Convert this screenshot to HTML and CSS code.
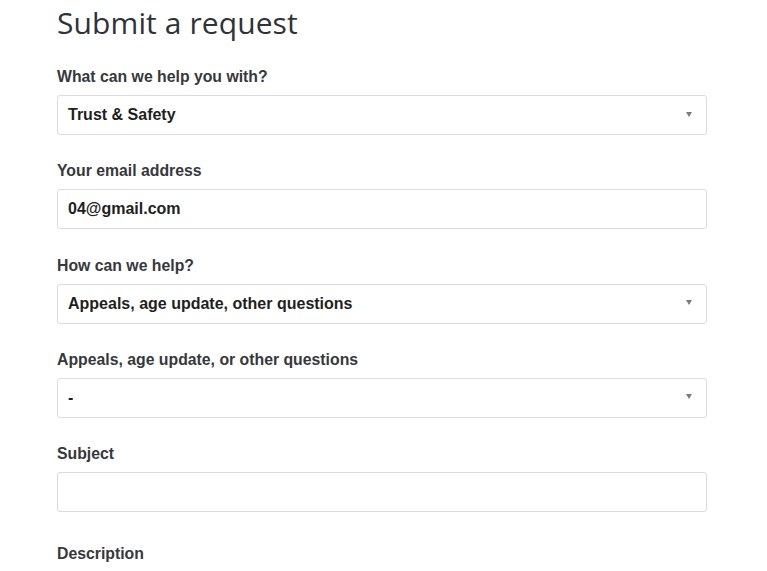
FILE: index.html
```html
<!DOCTYPE html>
<html>
<head>
<meta charset="utf-8">
<link rel="stylesheet" href="styles.css">
</head>
<body>
<main class="page">
  <h1 class="title">Submit a request</h1>
  <form class="form">
    <div class="field">
      <label class="label">What can we help you with?</label>
      <div class="box select"><span class="value">Trust &amp; Safety</span><span class="arrow"></span></div>
    </div>
    <div class="field">
      <label class="label">Your email address</label>
      <div class="box"><span class="value">04@gmail.com</span></div>
    </div>
    <div class="field">
      <label class="label">How can we help?</label>
      <div class="box select"><span class="value">Appeals, age update, other questions</span><span class="arrow"></span></div>
    </div>
    <div class="field">
      <label class="label">Appeals, age update, or other questions</label>
      <div class="box select"><span class="value">-</span><span class="arrow"></span></div>
    </div>
    <div class="field">
      <label class="label">Subject</label>
      <div class="box"></div>
    </div>
    <div class="field desc">
      <label class="label">Description</label>
    </div>
  </form>
</main>
</body>
</html>
```
FILE: styles.css
```css
* { box-sizing: border-box; }
html, body { margin: 0; padding: 0; background: #fff; }
body { font-family: "Liberation Sans", Arial, sans-serif; color: #2f3033; }
.page { padding: 0 60px 0 57px; }
.title {
  font-family: "Open Sans", "Noto Sans", sans-serif;
  font-weight: 400;
  font-size: 30px;
  color: #2f3238;
  margin: 0;
  padding-top: 2px;
  line-height: 42px;
  letter-spacing: 0.1px;
}
.form { display: flex; flex-direction: column; margin-top: 24px; }
.field { display: flex; flex-direction: column; margin-bottom: 27.3px; }
.field.desc { margin-top: 6px; margin-bottom: 0; }
.label {
  font-size: 15.8px;
  font-weight: 700;
  color: #37383c;
  line-height: 18px;
  margin-bottom: 9px;
}
.desc .label { margin-bottom: 0; }
.box {
  height: 40px;
  border: 1px solid #dcdcdc;
  border-radius: 3px;
  display: flex;
  align-items: center;
  padding: 0 11px 0 10px;
  justify-content: space-between;
}
.value { font-size: 16px; font-weight: 700; color: #1f1f22; }
.arrow {
  width: 0; height: 0;
  border-left: 3.5px solid transparent;
  border-right: 3.5px solid transparent;
  border-top: 5px solid #7a7a7a;
  margin-right: 3px;
  margin-top: -2px;
}
```
